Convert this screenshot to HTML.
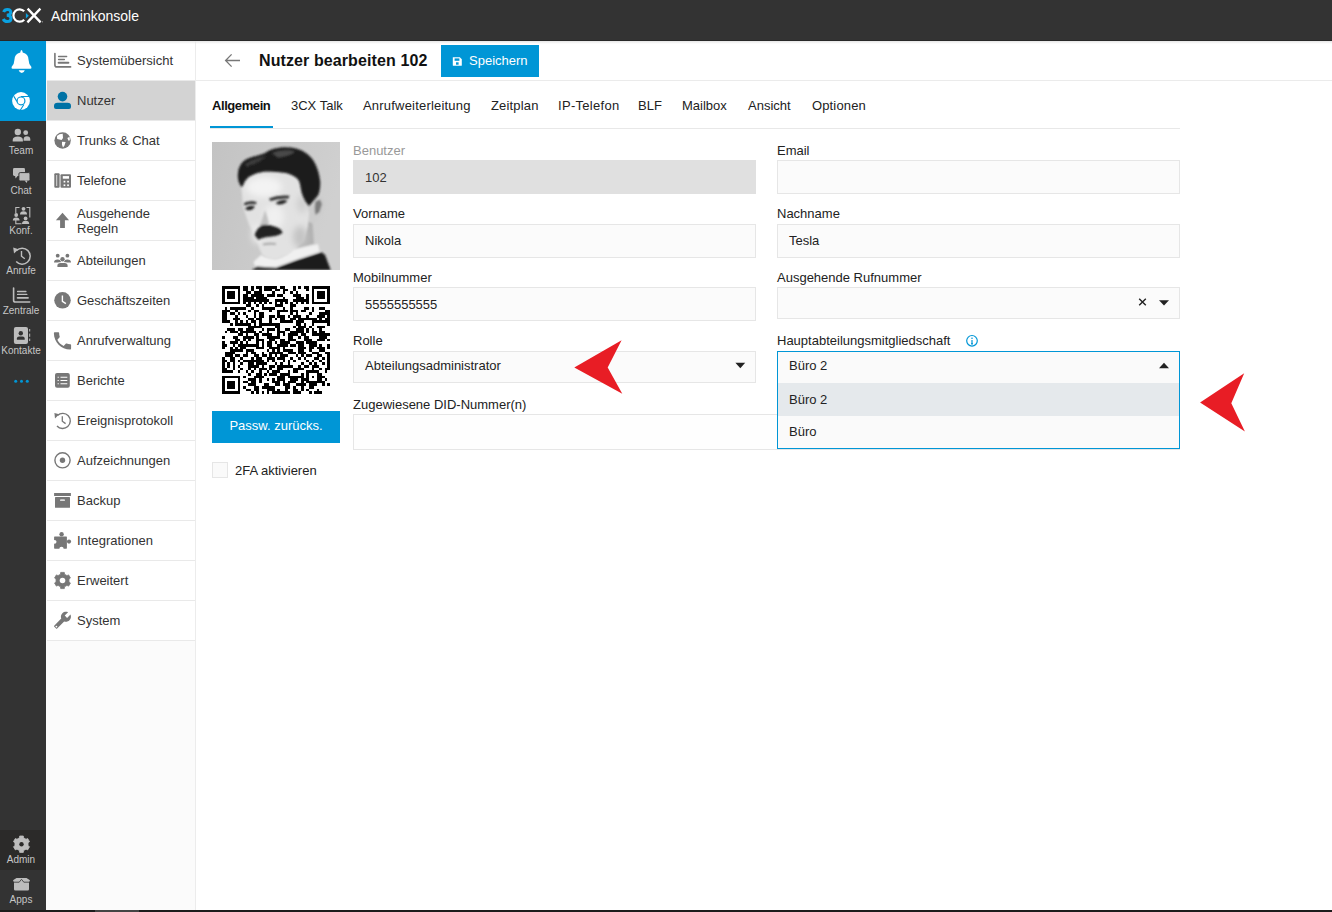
<!DOCTYPE html>
<html><head><meta charset="utf-8"><style>
*{box-sizing:border-box;margin:0;padding:0}
html,body{width:1332px;height:912px;overflow:hidden;background:#fff;font-family:"Liberation Sans",sans-serif;font-size:13px;color:#222}
.a{position:absolute}
.t{position:absolute;white-space:nowrap;line-height:15px;font-size:13px}
.rl{position:absolute;left:0;width:42px;text-align:center;font-size:10px;line-height:12px;color:#c6c6c6;white-space:nowrap}
.inp{position:absolute;background:#fbfbfb;border:1px solid #e6e6e6}
.sep{position:absolute;left:47px;width:148px;height:1px;background:#e9e9e9}
.nt{position:absolute;left:77px;white-space:nowrap;line-height:15px;font-size:13px;color:#333}
</style></head><body>
<div class="a" style="left:0;top:0;width:1332px;height:40px;background:#333"></div>
<div class="a" style="left:0;top:40px;width:1332px;height:1px;background:#282828"></div>
<div class="t" style="left:51px;top:8px;font-size:14px;line-height:16px;color:#fff">Adminkonsole</div>
<svg class="a" style="left:0;top:0" width="48" height="30" viewBox="0 0 48 30"><path d="M3.6 12Q4.6 9.5 7.4 9.5Q10.8 9.5 10.8 12.3Q10.8 15 6.8 15.3Q11 15.5 11 18.5Q11 21.5 7.3 21.5Q4.4 21.5 3.2 19" stroke="#0aa2e2" stroke-width="3" fill="none"/><path d="M24.2 11.3A6.2 6.2 0 1 0 24.2 19.7" stroke="#fff" stroke-width="2.2" fill="none"/><path d="M25.9 13L28.8 15.7L25.9 18.4Z" fill="#0aa2e2"/><path d="M27.6 8.6L40.6 22.4M40.4 8.6L27.4 22.4" stroke="#fff" stroke-width="2.3"/><circle cx="42.5" cy="21.8" r="0.6" fill="#aaa"/></svg>
<div class="a" style="left:0;top:41px;width:46px;height:869px;background:#333"></div>
<div class="a" style="left:0;top:41px;width:46px;height:80px;background:#0096d6"></div>
<div class="a" style="left:0;top:830px;width:46px;height:40px;background:#2b2a29"></div>
<div class="a" style="left:46px;top:41px;width:150px;height:869px;background:#fbfbfb;border-right:1px solid #ececec"></div>
<div class="a" style="left:47px;top:41px;width:148px;height:599px;background:#fff"></div>
<div class="a" style="left:47px;top:81px;width:148px;height:39px;background:#d3d3d3"></div>
<div class="a" style="left:46px;top:41px;width:1286px;height:3px;background:linear-gradient(#e6e6e6,rgba(255,255,255,0))"></div>
<div class="a" style="left:0;top:910px;width:1332px;height:2px;background:#1c1c1c"></div>
<div class="a" style="left:95px;top:910px;width:44px;height:2px;background:#444"></div>
<div class="sep" style="top:80px"></div>
<div class="nt" style="top:53px">Systemübersicht</div>
<div class="sep" style="top:120px"></div>
<div class="nt" style="top:93px">Nutzer</div>
<div class="sep" style="top:160px"></div>
<div class="nt" style="top:133px">Trunks &amp; Chat</div>
<div class="sep" style="top:200px"></div>
<div class="nt" style="top:173px">Telefone</div>
<div class="sep" style="top:240px"></div>
<div class="nt" style="top:194px"></div>
<div class="nt" style="top:206px">Ausgehende</div>
<div class="nt" style="top:221px">Regeln</div>
<div class="sep" style="top:280px"></div>
<div class="nt" style="top:253px">Abteilungen</div>
<div class="sep" style="top:320px"></div>
<div class="nt" style="top:293px">Geschäftszeiten</div>
<div class="sep" style="top:360px"></div>
<div class="nt" style="top:333px">Anrufverwaltung</div>
<div class="sep" style="top:400px"></div>
<div class="nt" style="top:373px">Berichte</div>
<div class="sep" style="top:440px"></div>
<div class="nt" style="top:413px">Ereignisprotokoll</div>
<div class="sep" style="top:480px"></div>
<div class="nt" style="top:453px">Aufzeichnungen</div>
<div class="sep" style="top:520px"></div>
<div class="nt" style="top:493px">Backup</div>
<div class="sep" style="top:560px"></div>
<div class="nt" style="top:533px">Integrationen</div>
<div class="sep" style="top:600px"></div>
<div class="nt" style="top:573px">Erweitert</div>
<div class="sep" style="top:640px"></div>
<div class="nt" style="top:613px">System</div>
<div class="rl" style="top:145px">Team</div>
<div class="rl" style="top:185px">Chat</div>
<div class="rl" style="top:225px">Konf.</div>
<div class="rl" style="top:265px">Anrufe</div>
<div class="rl" style="top:305px">Zentrale</div>
<div class="rl" style="top:345px">Kontakte</div>
<div class="rl" style="top:854px">Admin</div>
<div class="rl" style="top:894px">Apps</div>
<div class="a" style="left:196px;top:80px;width:1136px;height:1px;background:#ebebeb"></div>
<div class="t" style="left:259px;top:52px;font-size:16px;line-height:18px;font-weight:700;color:#111;letter-spacing:0.1px">Nutzer bearbeiten 102</div>
<div class="a" style="left:441px;top:45px;width:98px;height:32px;background:#0096d6"></div>
<div class="t" style="left:469px;top:53px;color:#fff">Speichern</div>
<div class="t" style="left:212px;top:98px;color:#222;font-weight:700;color:#111;letter-spacing:-0.42px;">Allgemein</div>
<div class="t" style="left:291px;top:98px;color:#222;letter-spacing:0px;">3CX Talk</div>
<div class="t" style="left:363px;top:98px;color:#222;letter-spacing:0.2px;">Anrufweiterleitung</div>
<div class="t" style="left:491px;top:98px;color:#222;letter-spacing:0.17px;">Zeitplan</div>
<div class="t" style="left:558px;top:98px;color:#222;letter-spacing:0.3px;">IP-Telefon</div>
<div class="t" style="left:638px;top:98px;color:#222;letter-spacing:0px;">BLF</div>
<div class="t" style="left:682px;top:98px;color:#222;letter-spacing:0px;">Mailbox</div>
<div class="t" style="left:748px;top:98px;color:#222;letter-spacing:0px;">Ansicht</div>
<div class="t" style="left:812px;top:98px;color:#222;letter-spacing:0.14px;">Optionen</div>
<div class="a" style="left:210px;top:128px;width:970px;height:1px;background:#e8e8e8"></div>
<div class="a" style="left:210px;top:126px;width:63px;height:2px;background:#0096d6"></div>
<svg class="a" style="left:212px;top:142px" width="128" height="128" viewBox="0 0 128 128"><defs><filter id="pb" x="-5%" y="-5%" width="110%" height="110%"><feGaussianBlur stdDeviation="0.8"/></filter>
<filter id="pb2" x="-30%" y="-30%" width="160%" height="160%"><feGaussianBlur stdDeviation="3"/></filter>
<linearGradient id="bgG" x1="0" y1="0" x2="1" y2="0.3"><stop offset="0" stop-color="#c3c3c3"/><stop offset="1" stop-color="#d0d0d0"/></linearGradient>
</defs>
<rect width="128" height="128" fill="url(#bgG)"/>
<g filter="url(#pb)">
<path d="M97 71L106.1 53.3L111.7 55.4L113.6 63.2L110.5 72L106.1 77L100.5 81.5L96.3 79.4Z" fill="#cdcdcd"/>
<path d="M103.5 59.5L108 57.5L110 62L107.5 70L103.5 73Q102 67 103.5 59.5Z" fill="#7c7c7c"/>
<path d="M96.3 79.4L100.5 81.5L101.9 101.9L85 106.1L92 97.7L95.6 85Z" fill="#b2b2b2"/>
<path d="M29.5 46.3L30.9 64L33 71L36.5 81.5L42.1 92L44.9 99.1L47.7 107.5L50.5 113.1L56.1 116L64 117.3L74.5 113.1L85 106.1L92 97.7L95.6 85L96.3 79.4L97 71L93.5 59.6L89.3 49.1L87.2 39.3L83.6 33.7L74.5 30.9L64 29.5L52.6 29.5L43.5 30.9L36.5 35.1L30.9 43.5Z" fill="#e2e2e2"/>
</g>
<g filter="url(#pb2)">
<ellipse cx="52" cy="45" rx="18" ry="10" fill="#f3f3f3"/>
<ellipse cx="62" cy="75" rx="10" ry="12" fill="#f0f0f0"/>
<ellipse cx="45" cy="92" rx="5" ry="10" fill="#eeeeee"/>
<ellipse cx="88" cy="95" rx="7" ry="11" fill="#c4c4c4"/>
<ellipse cx="90" cy="62" rx="5" ry="9" fill="#cfcfcf"/>
</g>
<g filter="url(#pb)">
<path d="M29.5 44.9Q24 38 26.7 26.7Q30 18 37.9 15.8Q46 13.5 52.6 11.2Q60 6 71 5.3Q84 5 90.7 9.1Q99 14 102.6 20.4Q107 29 108.2 39.3Q108.5 48 106.1 53.3L97 64L93.5 59.6Q90 53 89.3 49.1Q88 41 87.2 39.3Q85 34 74.5 30.9Q64 29 52.6 29.5Q43 30.5 36.5 35.1Q32 39 30.9 43.5Z" fill="#1b1b1b"/>
<path d="M60 11Q72 6.5 83 9.5Q78 14 66 15.5Z" fill="#4a4a4a"/><path d="M38 19Q46 15 55 14Q48 20 40 23Z" fill="#3a3a3a"/>
<path d="M33 22Q39 18 45 17.5Q40 22 35 25Z" fill="#3c3c3c"/>
<path d="M32 61Q38 58.3 44.5 60L44 62.3Q38 61.5 32.5 63.5Z" fill="#2c2c2c"/>
<path d="M57 56.5Q66 52.8 77.5 53.8L76.5 56.6Q67 55.8 58.5 59Z" fill="#333"/>
<path d="M33 66.5Q37 62.5 43 64.5Q40.5 69 35 68Z" fill="#222"/>
<path d="M63.5 61Q69 56.5 75.5 58.5Q72.5 63 66 62.5Z" fill="#262626"/>
<path d="M53 68Q55.5 75 57 81.5L53.5 84Q50 83.5 48.5 82.5Z" fill="#c2c2c2"/>
<path d="M48 83Q52 85 57.5 83.5" stroke="#9a9a9a" stroke-width="1.2" fill="none"/>
<path d="M42.8 93.5Q43 88 50.5 83Q56 82 64 85Q70 87 70.5 91Q66 94.5 54.7 94.9Q49 96 46.3 97.7Z" fill="#222"/>
<path d="M51 102.5Q58 101 64 102" stroke="#a0a0a0" stroke-width="1.6" fill="none"/>
<path d="M41.4 120.1L49.1 113.1Q56 117 64 117.3Q75 114 81.5 107.5L106.1 101.9L107.5 109.6L85 117.3L64 125L44.9 128Z" fill="#f0f0f0"/>
<path d="M40 128L44.9 124.4L64 125.8L85 118L109.6 110.3L113.1 113.1L118.7 128Z" fill="#1d1d1d"/>
</g>
</svg>
<svg class="a" style="left:222px;top:286px" width="108" height="108" viewBox="0 0 41 41" shape-rendering="crispEdges"><path d="M0 0h7v1h-7zM8 0h2v1h-2zM11 0h1v1h-1zM13 0h2v1h-2zM16 0h5v1h-5zM22 0h2v1h-2zM27 0h1v1h-1zM29 0h1v1h-1zM31 0h2v1h-2zM34 0h7v1h-7zM0 1h1v1h-1zM6 1h1v1h-1zM8 1h2v1h-2zM11 1h1v1h-1zM14 1h1v1h-1zM16 1h3v1h-3zM20 1h2v1h-2zM23 1h2v1h-2zM27 1h1v1h-1zM32 1h1v1h-1zM34 1h1v1h-1zM40 1h1v1h-1zM0 2h1v1h-1zM2 2h3v1h-3zM6 2h1v1h-1zM9 2h2v1h-2zM12 2h3v1h-3zM19 2h1v1h-1zM23 2h1v1h-1zM26 2h1v1h-1zM28 2h1v1h-1zM34 2h1v1h-1zM36 2h3v1h-3zM40 2h1v1h-1zM0 3h1v1h-1zM2 3h3v1h-3zM6 3h1v1h-1zM8 3h2v1h-2zM11 3h5v1h-5zM17 3h3v1h-3zM21 3h2v1h-2zM27 3h3v1h-3zM32 3h1v1h-1zM34 3h1v1h-1zM36 3h3v1h-3zM40 3h1v1h-1zM0 4h1v1h-1zM2 4h3v1h-3zM6 4h1v1h-1zM8 4h4v1h-4zM13 4h4v1h-4zM23 4h1v1h-1zM28 4h3v1h-3zM32 4h1v1h-1zM34 4h1v1h-1zM36 4h3v1h-3zM40 4h1v1h-1zM0 5h1v1h-1zM6 5h1v1h-1zM8 5h10v1h-10zM20 5h5v1h-5zM27 5h6v1h-6zM34 5h1v1h-1zM40 5h1v1h-1zM0 6h7v1h-7zM8 6h1v1h-1zM10 6h1v1h-1zM12 6h1v1h-1zM14 6h1v1h-1zM16 6h1v1h-1zM18 6h1v1h-1zM20 6h1v1h-1zM22 6h1v1h-1zM24 6h1v1h-1zM26 6h1v1h-1zM28 6h1v1h-1zM30 6h1v1h-1zM32 6h1v1h-1zM34 6h7v1h-7zM9 7h2v1h-2zM13 7h1v1h-1zM15 7h1v1h-1zM20 7h3v1h-3zM26 7h2v1h-2zM1 8h1v1h-1zM3 8h6v1h-6zM11 8h1v1h-1zM15 8h5v1h-5zM23 8h1v1h-1zM26 8h1v1h-1zM31 8h2v1h-2zM34 8h1v1h-1zM37 8h2v1h-2zM0 9h3v1h-3zM5 9h1v1h-1zM10 9h1v1h-1zM12 9h2v1h-2zM18 9h1v1h-1zM21 9h4v1h-4zM26 9h3v1h-3zM30 9h2v1h-2zM34 9h1v1h-1zM39 9h2v1h-2zM0 10h2v1h-2zM3 10h2v1h-2zM6 10h1v1h-1zM8 10h1v1h-1zM12 10h1v1h-1zM14 10h2v1h-2zM21 10h1v1h-1zM26 10h1v1h-1zM28 10h1v1h-1zM33 10h1v1h-1zM37 10h4v1h-4zM0 11h2v1h-2zM5 11h1v1h-1zM9 11h1v1h-1zM12 11h1v1h-1zM14 11h2v1h-2zM18 11h2v1h-2zM21 11h3v1h-3zM25 11h1v1h-1zM27 11h3v1h-3zM32 11h1v1h-1zM36 11h3v1h-3zM40 11h1v1h-1zM0 12h2v1h-2zM4 12h3v1h-3zM10 12h2v1h-2zM13 12h2v1h-2zM18 12h1v1h-1zM20 12h1v1h-1zM22 12h2v1h-2zM26 12h2v1h-2zM29 12h7v1h-7zM37 12h1v1h-1zM39 12h2v1h-2zM0 13h3v1h-3zM5 13h1v1h-1zM7 13h1v1h-1zM9 13h1v1h-1zM11 13h2v1h-2zM14 13h1v1h-1zM18 13h1v1h-1zM22 13h5v1h-5zM28 13h3v1h-3zM34 13h7v1h-7zM3 14h1v1h-1zM5 14h6v1h-6zM12 14h1v1h-1zM14 14h8v1h-8zM28 14h2v1h-2zM31 14h1v1h-1zM34 14h1v1h-1zM40 14h1v1h-1zM10 15h5v1h-5zM20 15h2v1h-2zM27 15h1v1h-1zM29 15h3v1h-3zM33 15h1v1h-1zM36 15h3v1h-3zM2 16h3v1h-3zM6 16h2v1h-2zM9 16h3v1h-3zM15 16h1v1h-1zM17 16h3v1h-3zM21 16h1v1h-1zM24 16h2v1h-2zM28 16h3v1h-3zM32 16h1v1h-1zM34 16h1v1h-1zM37 16h1v1h-1zM1 17h1v1h-1zM3 17h3v1h-3zM7 17h6v1h-6zM14 17h1v1h-1zM17 17h1v1h-1zM21 17h3v1h-3zM26 17h5v1h-5zM32 17h1v1h-1zM34 17h2v1h-2zM37 17h2v1h-2zM6 18h2v1h-2zM9 18h1v1h-1zM12 18h2v1h-2zM15 18h4v1h-4zM21 18h1v1h-1zM23 18h1v1h-1zM25 18h4v1h-4zM30 18h2v1h-2zM34 18h7v1h-7zM0 19h1v1h-1zM4 19h2v1h-2zM8 19h4v1h-4zM13 19h1v1h-1zM17 19h5v1h-5zM25 19h2v1h-2zM29 19h1v1h-1zM31 19h2v1h-2zM37 19h3v1h-3zM5 20h2v1h-2zM8 20h1v1h-1zM10 20h1v1h-1zM13 20h3v1h-3zM18 20h2v1h-2zM22 20h2v1h-2zM25 20h3v1h-3zM31 20h3v1h-3zM36 20h3v1h-3zM40 20h1v1h-1zM0 21h1v1h-1zM3 21h3v1h-3zM7 21h1v1h-1zM9 21h1v1h-1zM13 21h1v1h-1zM15 21h1v1h-1zM17 21h2v1h-2zM20 21h1v1h-1zM22 21h4v1h-4zM28 21h3v1h-3zM32 21h4v1h-4zM0 22h2v1h-2zM4 22h1v1h-1zM6 22h8v1h-8zM15 22h1v1h-1zM17 22h2v1h-2zM21 22h4v1h-4zM26 22h2v1h-2zM29 22h2v1h-2zM33 22h3v1h-3zM37 22h1v1h-1zM40 22h1v1h-1zM0 23h1v1h-1zM3 23h1v1h-1zM5 23h1v1h-1zM7 23h2v1h-2zM13 23h3v1h-3zM18 23h4v1h-4zM23 23h1v1h-1zM29 23h3v1h-3zM33 23h2v1h-2zM36 23h3v1h-3zM40 23h1v1h-1zM3 24h5v1h-5zM9 24h3v1h-3zM17 24h1v1h-1zM19 24h1v1h-1zM21 24h1v1h-1zM23 24h4v1h-4zM29 24h2v1h-2zM33 24h1v1h-1zM37 24h2v1h-2zM1 25h4v1h-4zM9 25h1v1h-1zM11 25h2v1h-2zM15 25h1v1h-1zM18 25h5v1h-5zM25 25h3v1h-3zM29 25h3v1h-3zM34 25h3v1h-3zM39 25h2v1h-2zM1 26h3v1h-3zM5 26h2v1h-2zM8 26h2v1h-2zM12 26h2v1h-2zM15 26h2v1h-2zM18 26h1v1h-1zM20 26h1v1h-1zM22 26h3v1h-3zM28 26h1v1h-1zM30 26h1v1h-1zM32 26h2v1h-2zM36 26h2v1h-2zM40 26h1v1h-1zM0 27h1v1h-1zM3 27h2v1h-2zM7 27h1v1h-1zM11 27h1v1h-1zM13 27h2v1h-2zM17 27h3v1h-3zM21 27h3v1h-3zM26 27h1v1h-1zM29 27h1v1h-1zM31 27h1v1h-1zM35 27h2v1h-2zM38 27h1v1h-1zM40 27h1v1h-1zM0 28h2v1h-2zM3 28h2v1h-2zM6 28h1v1h-1zM8 28h8v1h-8zM17 28h1v1h-1zM19 28h1v1h-1zM23 28h1v1h-1zM25 28h1v1h-1zM27 28h1v1h-1zM32 28h1v1h-1zM34 28h1v1h-1zM37 28h1v1h-1zM40 28h1v1h-1zM0 29h1v1h-1zM2 29h1v1h-1zM4 29h1v1h-1zM7 29h1v1h-1zM10 29h2v1h-2zM13 29h4v1h-4zM20 29h1v1h-1zM22 29h1v1h-1zM25 29h1v1h-1zM30 29h1v1h-1zM33 29h1v1h-1zM35 29h1v1h-1zM38 29h1v1h-1zM40 29h1v1h-1zM0 30h1v1h-1zM2 30h1v1h-1zM4 30h1v1h-1zM6 30h1v1h-1zM10 30h4v1h-4zM15 30h1v1h-1zM18 30h2v1h-2zM21 30h6v1h-6zM29 30h1v1h-1zM31 30h2v1h-2zM34 30h3v1h-3zM40 30h1v1h-1zM0 31h2v1h-2zM4 31h1v1h-1zM7 31h1v1h-1zM10 31h1v1h-1zM12 31h1v1h-1zM14 31h3v1h-3zM18 31h1v1h-1zM21 31h2v1h-2zM27 31h4v1h-4zM34 31h1v1h-1zM37 31h1v1h-1zM39 31h2v1h-2zM0 32h4v1h-4zM6 32h1v1h-1zM9 32h1v1h-1zM11 32h1v1h-1zM14 32h1v1h-1zM17 32h1v1h-1zM19 32h3v1h-3zM25 32h1v1h-1zM27 32h2v1h-2zM32 32h5v1h-5zM39 32h1v1h-1zM10 33h1v1h-1zM13 33h2v1h-2zM16 33h1v1h-1zM18 33h3v1h-3zM22 33h4v1h-4zM30 33h1v1h-1zM32 33h1v1h-1zM36 33h2v1h-2zM0 34h7v1h-7zM8 34h1v1h-1zM12 34h4v1h-4zM21 34h3v1h-3zM25 34h6v1h-6zM32 34h1v1h-1zM34 34h1v1h-1zM36 34h3v1h-3zM0 35h1v1h-1zM6 35h1v1h-1zM10 35h3v1h-3zM14 35h1v1h-1zM17 35h1v1h-1zM19 35h1v1h-1zM21 35h3v1h-3zM26 35h3v1h-3zM30 35h3v1h-3zM36 35h2v1h-2zM39 35h1v1h-1zM0 36h1v1h-1zM2 36h3v1h-3zM6 36h1v1h-1zM8 36h2v1h-2zM11 36h2v1h-2zM14 36h1v1h-1zM19 36h3v1h-3zM23 36h1v1h-1zM25 36h3v1h-3zM30 36h1v1h-1zM32 36h7v1h-7zM0 37h1v1h-1zM2 37h3v1h-3zM6 37h1v1h-1zM10 37h3v1h-3zM16 37h2v1h-2zM20 37h2v1h-2zM23 37h3v1h-3zM28 37h4v1h-4zM33 37h3v1h-3zM38 37h1v1h-1zM40 37h1v1h-1zM0 38h1v1h-1zM2 38h3v1h-3zM6 38h1v1h-1zM8 38h1v1h-1zM12 38h2v1h-2zM15 38h5v1h-5zM24 38h2v1h-2zM27 38h1v1h-1zM30 38h1v1h-1zM33 38h2v1h-2zM0 39h1v1h-1zM6 39h1v1h-1zM9 39h2v1h-2zM12 39h2v1h-2zM17 39h3v1h-3zM21 39h1v1h-1zM24 39h1v1h-1zM27 39h2v1h-2zM30 39h1v1h-1zM32 39h1v1h-1zM36 39h1v1h-1zM0 40h7v1h-7zM11 40h1v1h-1zM13 40h1v1h-1zM15 40h1v1h-1zM17 40h1v1h-1zM19 40h7v1h-7zM27 40h3v1h-3zM33 40h1v1h-1zM35 40h3v1h-3z" fill="#000"/></svg>
<div class="a" style="left:212px;top:411px;width:128px;height:32px;background:#0096d6"></div>
<div class="t" style="left:212px;width:128px;text-align:center;top:418px;color:#fff">Passw. zurücks.</div>
<div class="a" style="left:212px;top:462px;width:16px;height:16px;background:#fafafa;border:1px solid #e6e6e6"></div>
<div class="t" style="left:235px;top:463px">2FA aktivieren</div>
<div class="t" style="left:353px;top:143px;color:#999">Benutzer</div>
<div class="a" style="left:353px;top:160px;width:403px;height:34px;background:#e0e0e0"></div>
<div class="t" style="left:365px;top:170px;color:#333">102</div>
<div class="t" style="left:353px;top:206px;color:#222">Vorname</div>
<div class="inp" style="left:353px;top:224px;width:403px;height:34px"></div>
<div class="t" style="left:365px;top:233px">Nikola</div>
<div class="t" style="left:353px;top:270px;color:#222">Mobilnummer</div>
<div class="inp" style="left:353px;top:287px;width:403px;height:34px"></div>
<div class="t" style="left:365px;top:297px">5555555555</div>
<div class="t" style="left:353px;top:333px;color:#222">Rolle</div>
<div class="inp" style="left:353px;top:351px;width:403px;height:32px"></div>
<div class="t" style="left:365px;top:358px">Abteilungsadministrator</div>
<div class="t" style="left:353px;top:397px;color:#222">Zugewiesene DID-Nummer(n)</div>
<div class="inp" style="left:353px;top:414px;width:827px;height:36px;background:#fefefe"></div>
<div class="t" style="left:777px;top:143px;color:#222">Email</div>
<div class="inp" style="left:777px;top:160px;width:403px;height:34px"></div>
<div class="t" style="left:777px;top:206px;color:#222">Nachname</div>
<div class="inp" style="left:777px;top:224px;width:403px;height:34px"></div>
<div class="t" style="left:789px;top:233px">Tesla</div>
<div class="t" style="left:777px;top:270px;color:#222">Ausgehende Rufnummer</div>
<div class="inp" style="left:777px;top:287px;width:403px;height:32px"></div>
<div class="t" style="left:777px;top:333px;color:#222">Hauptabteilungsmitgliedschaft</div>
<div class="a" style="left:777px;top:351px;width:403px;height:98px;background:#fafafa;border:1px solid #0096d6"></div>
<div class="a" style="left:778px;top:383px;width:401px;height:33px;background:#e5e9ec"></div>
<div class="t" style="left:789px;top:358px">Büro 2</div>
<div class="t" style="left:789px;top:392px">Büro 2</div>
<div class="t" style="left:789px;top:424px">Büro</div>
<svg class="a" style="left:0;top:0" width="1332" height="912" viewBox="0 0 1332 912"><g fill="none" stroke="#777" stroke-linecap="round">
<path d="M54.9 53.6V64.9Q54.9 66.9 56.9 66.9H70.6" stroke-width="1.6"/>
<path d="M58.6 56.4H66.6M58.6 59.6H64.3" stroke-width="1.5"/>
<path d="M58.6 62.8H68.4" stroke-width="2"/>
</g>
<circle cx="62.5" cy="96.6" r="4.8" fill="#0072a5"/>
<path d="M54 106Q54 102.8 57.5 102.8H67.5Q71 102.8 71 106V107Q71 109 69 109H56Q54 109 54 107Z" fill="#0072a5"/>
<circle cx="62.6" cy="140.5" r="8.2" fill="#777"/>
<path d="M56.9 136L59.4 134.2L62.7 133.8L63 138.1L61.6 140L59.4 139.6L57.2 138.9Z M62 141.8L65.6 142.1L64.5 145.4L63 147.6L62 144.7Z M67.4 138.1L69.6 136.7L69.9 140.3L68.5 140.7Z" fill="#fff"/>
<rect x="54.3" y="173.3" width="5.3" height="14.5" rx="1" fill="#777"/>
<rect x="56.2" y="175" width="1" height="11" fill="#ddd"/>
<rect x="60.5" y="174.3" width="10.5" height="13.5" rx="1" fill="#777"/>
<rect x="62.8" y="176.1" width="6.2" height="2.6" fill="#fff"/>
<rect x="63.6" y="180.8" width="1.7" height="1.7" fill="#fff"/><rect x="67.2" y="180.8" width="1.7" height="1.7" fill="#fff"/>
<rect x="63.6" y="184.4" width="1.7" height="1.7" fill="#fff"/><rect x="67.2" y="184.4" width="1.7" height="1.7" fill="#fff"/>
<path d="M55.9 220.3L62.5 212.8L69.1 220.3H64.9V227.9H60.1V220.3Z" fill="#777"/>
<circle cx="57.7" cy="255.7" r="1.9" fill="#777"/><circle cx="67.4" cy="255.7" r="1.9" fill="#777"/>
<path d="M54 262.4A3.6 3 0 0 1 61.2 262.4Z M63.8 262.4A3.6 3 0 0 1 71 262.4Z" fill="#777"/>
<circle cx="62.5" cy="259.3" r="2.6" fill="#fff"/>
<circle cx="62.5" cy="259.3" r="2.2" fill="#777"/>
<path d="M56.8 267.2V265.5Q56.8 262.3 60.5 262.3H64.5Q68.2 262.3 68.2 265.5V267.2Z" fill="#fff"/>
<path d="M57.4 267V265.5Q57.4 262.9 60.5 262.9H64.5Q67.6 262.9 67.6 265.5V267Z" fill="#777"/>
<circle cx="62.5" cy="300.3" r="8.25" fill="#777"/>
<path d="M62.4 295.6V301.3L65.9 303.7" stroke="#fff" stroke-width="1.4" fill="none"/>
<path transform="translate(51.03 329.33) scale(0.955)" d="M6.62 10.79c1.44 2.83 3.76 5.14 6.59 6.59l2.2-2.2c.27-.27.67-.36 1.02-.24 1.12.37 2.33.57 3.57.57.55 0 1 .45 1 1V20c0 .55-.45 1-1 1-9.39 0-17-7.61-17-17 0-.55.45-1 1-1h3.5c.55 0 1 .45 1 1 0 1.25.2 2.45.57 3.57.11.35.03.74-.25 1.02l-2.2 2.2z" fill="#777"/>
<rect x="55" y="373" width="14.8" height="14.7" rx="2" fill="#777"/>
<path d="M57.6 377.3h1.2M57.6 380.5h1.2M57.6 383.8h1.2M60.5 377.3H67.3M60.5 380.5H67.3M60.5 383.8H67.3" stroke="#fff" stroke-width="1.1"/>
<path d="M57.5 415.4A7.6 7.6 0 1 1 57 426" stroke="#777" stroke-width="1.4" fill="none"/>
<path d="M54.4 413L59.2 414.3L55 418.4Z" fill="#777"/>
<path d="M62.3 416.3V421.2L65.6 423.6" stroke="#777" stroke-width="1.3" fill="none"/>
<circle cx="62.5" cy="460.3" r="7.6" stroke="#777" stroke-width="1.4" fill="none"/>
<circle cx="62.5" cy="460.3" r="2.7" fill="#777"/>
<rect x="54.1" y="493" width="16.8" height="3" fill="#777"/>
<rect x="55" y="497.1" width="15" height="10.7" rx="0.6" fill="#777"/>
<rect x="60" y="499.3" width="5" height="1.8" rx="0.9" fill="#ddd"/>
<rect x="54.1" y="536.5" width="12.8" height="12.2" rx="0.6" fill="#777"/>
<circle cx="61.6" cy="534.2" r="2.2" fill="#777"/><circle cx="69" cy="541.6" r="2.1" fill="#777"/>
<circle cx="54.6" cy="541.8" r="1.9" fill="#fff"/><circle cx="61.5" cy="549" r="2.2" fill="#fff"/>
<path d="M60.53 574.20L60.69 572.40L64.31 572.40L64.47 574.20L66.97 575.64L68.61 574.88L70.42 578.02L68.94 579.06L68.94 581.94L70.42 582.98L68.61 586.12L66.97 585.36L64.47 586.80L64.31 588.60L60.69 588.60L60.53 586.80L58.03 585.36L56.39 586.12L54.58 582.98L56.06 581.94L56.06 579.06L54.58 578.02L56.39 574.88L58.03 575.64Z" fill="#777" stroke="#777" stroke-width="0.8" stroke-linejoin="round"/><circle cx="62.5" cy="580.5" r="2.8" fill="#fff"/>
<path transform="translate(71.7 611) scale(-0.77 0.77)" d="M22.7 19l-9.1-9.1c.9-2.3.4-5-1.5-6.9-2-2-5-2.4-7.4-1.3L9 6 6 9 1.6 4.7C.4 7.1.9 10.1 2.9 12.1c1.9 1.9 4.6 2.4 6.9 1.5l9.1 9.1c.4.4 1 .4 1.4 0l2.3-2.3c.5-.4.5-1.1.1-1.4z" fill="#777"/>
<circle cx="56.4" cy="626.6" r="0.9" fill="#fff"/>

<path d="M21.5 50.1Q22.5 50.3 22.7 52.6Q28.4 53.8 28.6 60Q28.8 64.5 31.3 66.8Q32 68.7 30.5 68.7H12.5Q11 68.7 11.7 66.8Q14.2 64.5 14.4 60Q14.6 53.8 20.3 52.6Q20.5 50.3 21.5 50.1Z" fill="#fff"/>
<path d="M18.7 70.2H24.8Q23.8 73 21.75 73Q19.7 73 18.7 70.2Z" fill="#fff"/>
<circle cx="21" cy="101" r="8.9" fill="#fff"/><circle cx="21" cy="100.9" r="4.5" fill="#0096d6"/><circle cx="21" cy="100.9" r="3.3" fill="#fff"/><path d="M20.9 96.5H29.2M23.9 104.5L20.3 110.3M16.9 101.5L13.9 96.4" stroke="#0096d6" stroke-width="1.1"/>

<g fill="#bdbdbd">
<circle cx="17.8" cy="132" r="3.2"/>
<path d="M12.7 141.5V140Q12.7 136.5 17.8 136.5Q22.9 136.5 22.9 140V141.5Z"/>
<circle cx="25.7" cy="132.7" r="2.4"/>
<path d="M23.6 140.8V139.5Q23.6 136.3 26.9 136.3Q30.3 136.3 30.3 139.5V140.8Z"/>
<rect x="13" y="168.1" width="12" height="7.8" rx="1.3"/>
<path d="M15 175L15.5 178.5L18.5 175Z"/>
<rect x="18.9" y="172.6" width="11.1" height="8.4" rx="1.3" stroke="#333" stroke-width="1"/>
<path d="M24.5 180.5L26.8 183L27.5 180.5Z"/>
<path d="M15.8 213V207.5H19.5M26.5 207.5H29.8V217.5M15.8 218.5V223.7H21.5" stroke="#bdbdbd" stroke-width="1.1" fill="none"/>
<circle cx="23.5" cy="208.8" r="1.9"/><path d="M20 214.5Q20 211.2 23.5 211.2Q27 211.2 27 214.5Z"/>
<circle cx="16.2" cy="215" r="1.9"/><path d="M12.8 220.6Q12.8 217.4 16.2 217.4Q19.6 217.4 19.6 220.6Z"/>
<circle cx="25.6" cy="218.4" r="1.9"/><path d="M22 224Q22 220.8 25.6 220.8Q29.2 220.8 29.2 224Z"/>
<path d="M21 221h0"/>
</g>
<path d="M16.5 250.5A8 8 0 1 1 16.2 261.5" stroke="#bdbdbd" stroke-width="1.5" fill="none"/>
<path d="M13.2 247.5L18.6 249.2L14 253.6Z" fill="#bdbdbd"/>
<path d="M21.5 251V256.2L24.8 258.7" stroke="#bdbdbd" stroke-width="1.4" fill="none"/>
<g fill="none" stroke="#bdbdbd" stroke-linecap="round">
<path d="M13.6 288V300.2Q13.6 302 15.4 302H29.7" stroke-width="1.6"/>
<path d="M17.6 291.5H25.9M17.6 294.4H26.8" stroke-width="1.4"/>
<path d="M17.6 297.8H28" stroke-width="1.8"/>
</g>
<rect x="13.9" y="327" width="14.1" height="17" rx="2" fill="#bdbdbd"/>
<circle cx="20.8" cy="333.2" r="2.2" fill="#333"/>
<path d="M16.9 339.8V338.6Q16.9 336.6 19 336.6H22.6Q24.7 336.6 24.7 338.6V339.8Z" fill="#333"/>
<path d="M29.7 329V331.5M29.7 333.6V336.8M29.7 338.6V341" stroke="#bdbdbd" stroke-width="1"/>
<circle cx="15.7" cy="381.3" r="1.5" fill="#0096d6"/><circle cx="21.5" cy="381.3" r="1.5" fill="#0096d6"/><circle cx="27.3" cy="381.3" r="1.5" fill="#0096d6"/>
<path d="M19.50 837.81L19.67 836.00L23.33 836.00L23.50 837.81L26.04 839.27L27.68 838.51L29.52 841.69L28.04 842.74L28.04 845.66L29.52 846.71L27.68 849.89L26.04 849.13L23.50 850.59L23.33 852.40L19.67 852.40L19.50 850.59L16.96 849.13L15.32 849.89L13.48 846.71L14.96 845.66L14.96 842.74L13.48 841.69L15.32 838.51L16.96 839.27Z" fill="#bdbdbd" stroke="#bdbdbd" stroke-width="0.8" stroke-linejoin="round"/><circle cx="21.5" cy="844.2" r="2.2" fill="#2b2a29"/>
<path d="M13 880.3L16.5 878H26.5L30 880.3L29 882.2V889.2Q29 890.5 27.7 890.5H15.3Q14 890.5 14 889.2V882.2Z" fill="#bdbdbd"/>
<path d="M14 882.2H19.2L21.5 879.3L23.8 882.2H29" stroke="#333" stroke-width="0.8" fill="none"/>

<path d="M240 60.5H225.8M231.6 54.4L225.6 60.5L231.6 66.6" stroke="#777" stroke-width="1.3" fill="none"/>
<path d="M452.8 57.2H459.8L461.8 59.2V65.2Q461.8 65.8 461.2 65.8H453.4Q452.8 65.8 452.8 65.2Z" fill="#fff"/>
<rect x="454.6" y="58.4" width="4.8" height="2.4" fill="#0096d6"/>
<rect x="456" y="62.3" width="2.6" height="2.4" fill="#0096d6"/>
<circle cx="972" cy="340.8" r="5.3" stroke="#0096d6" stroke-width="1.2" fill="none"/>
<circle cx="972" cy="338.3" r="0.8" fill="#0096d6"/>
<path d="M972 340V343.8M971 343.8H973" stroke="#0096d6" stroke-width="1.2"/>
<path d="M735.4 362.8H745.2L740.3 368.2Z" fill="#222"/>
<path d="M1139.2 298.7L1145.8 305.3M1145.8 298.7L1139.2 305.3" stroke="#222" stroke-width="1.4"/>
<path d="M1159 300.2H1169L1164 305.4Z" fill="#222"/>
<path d="M1159 368.2H1169L1164 362.8Z" fill="#222"/>
<path d="M574.3 367.5L621.6 340.2L607.7 367.5L622.3 393.8Z" fill="#e81d25"/><path d="M1200.1 402.5L1244.2 373.2L1231.3 403.2L1244.9 431.4Z" fill="#e81d25"/></svg>
</body></html>
